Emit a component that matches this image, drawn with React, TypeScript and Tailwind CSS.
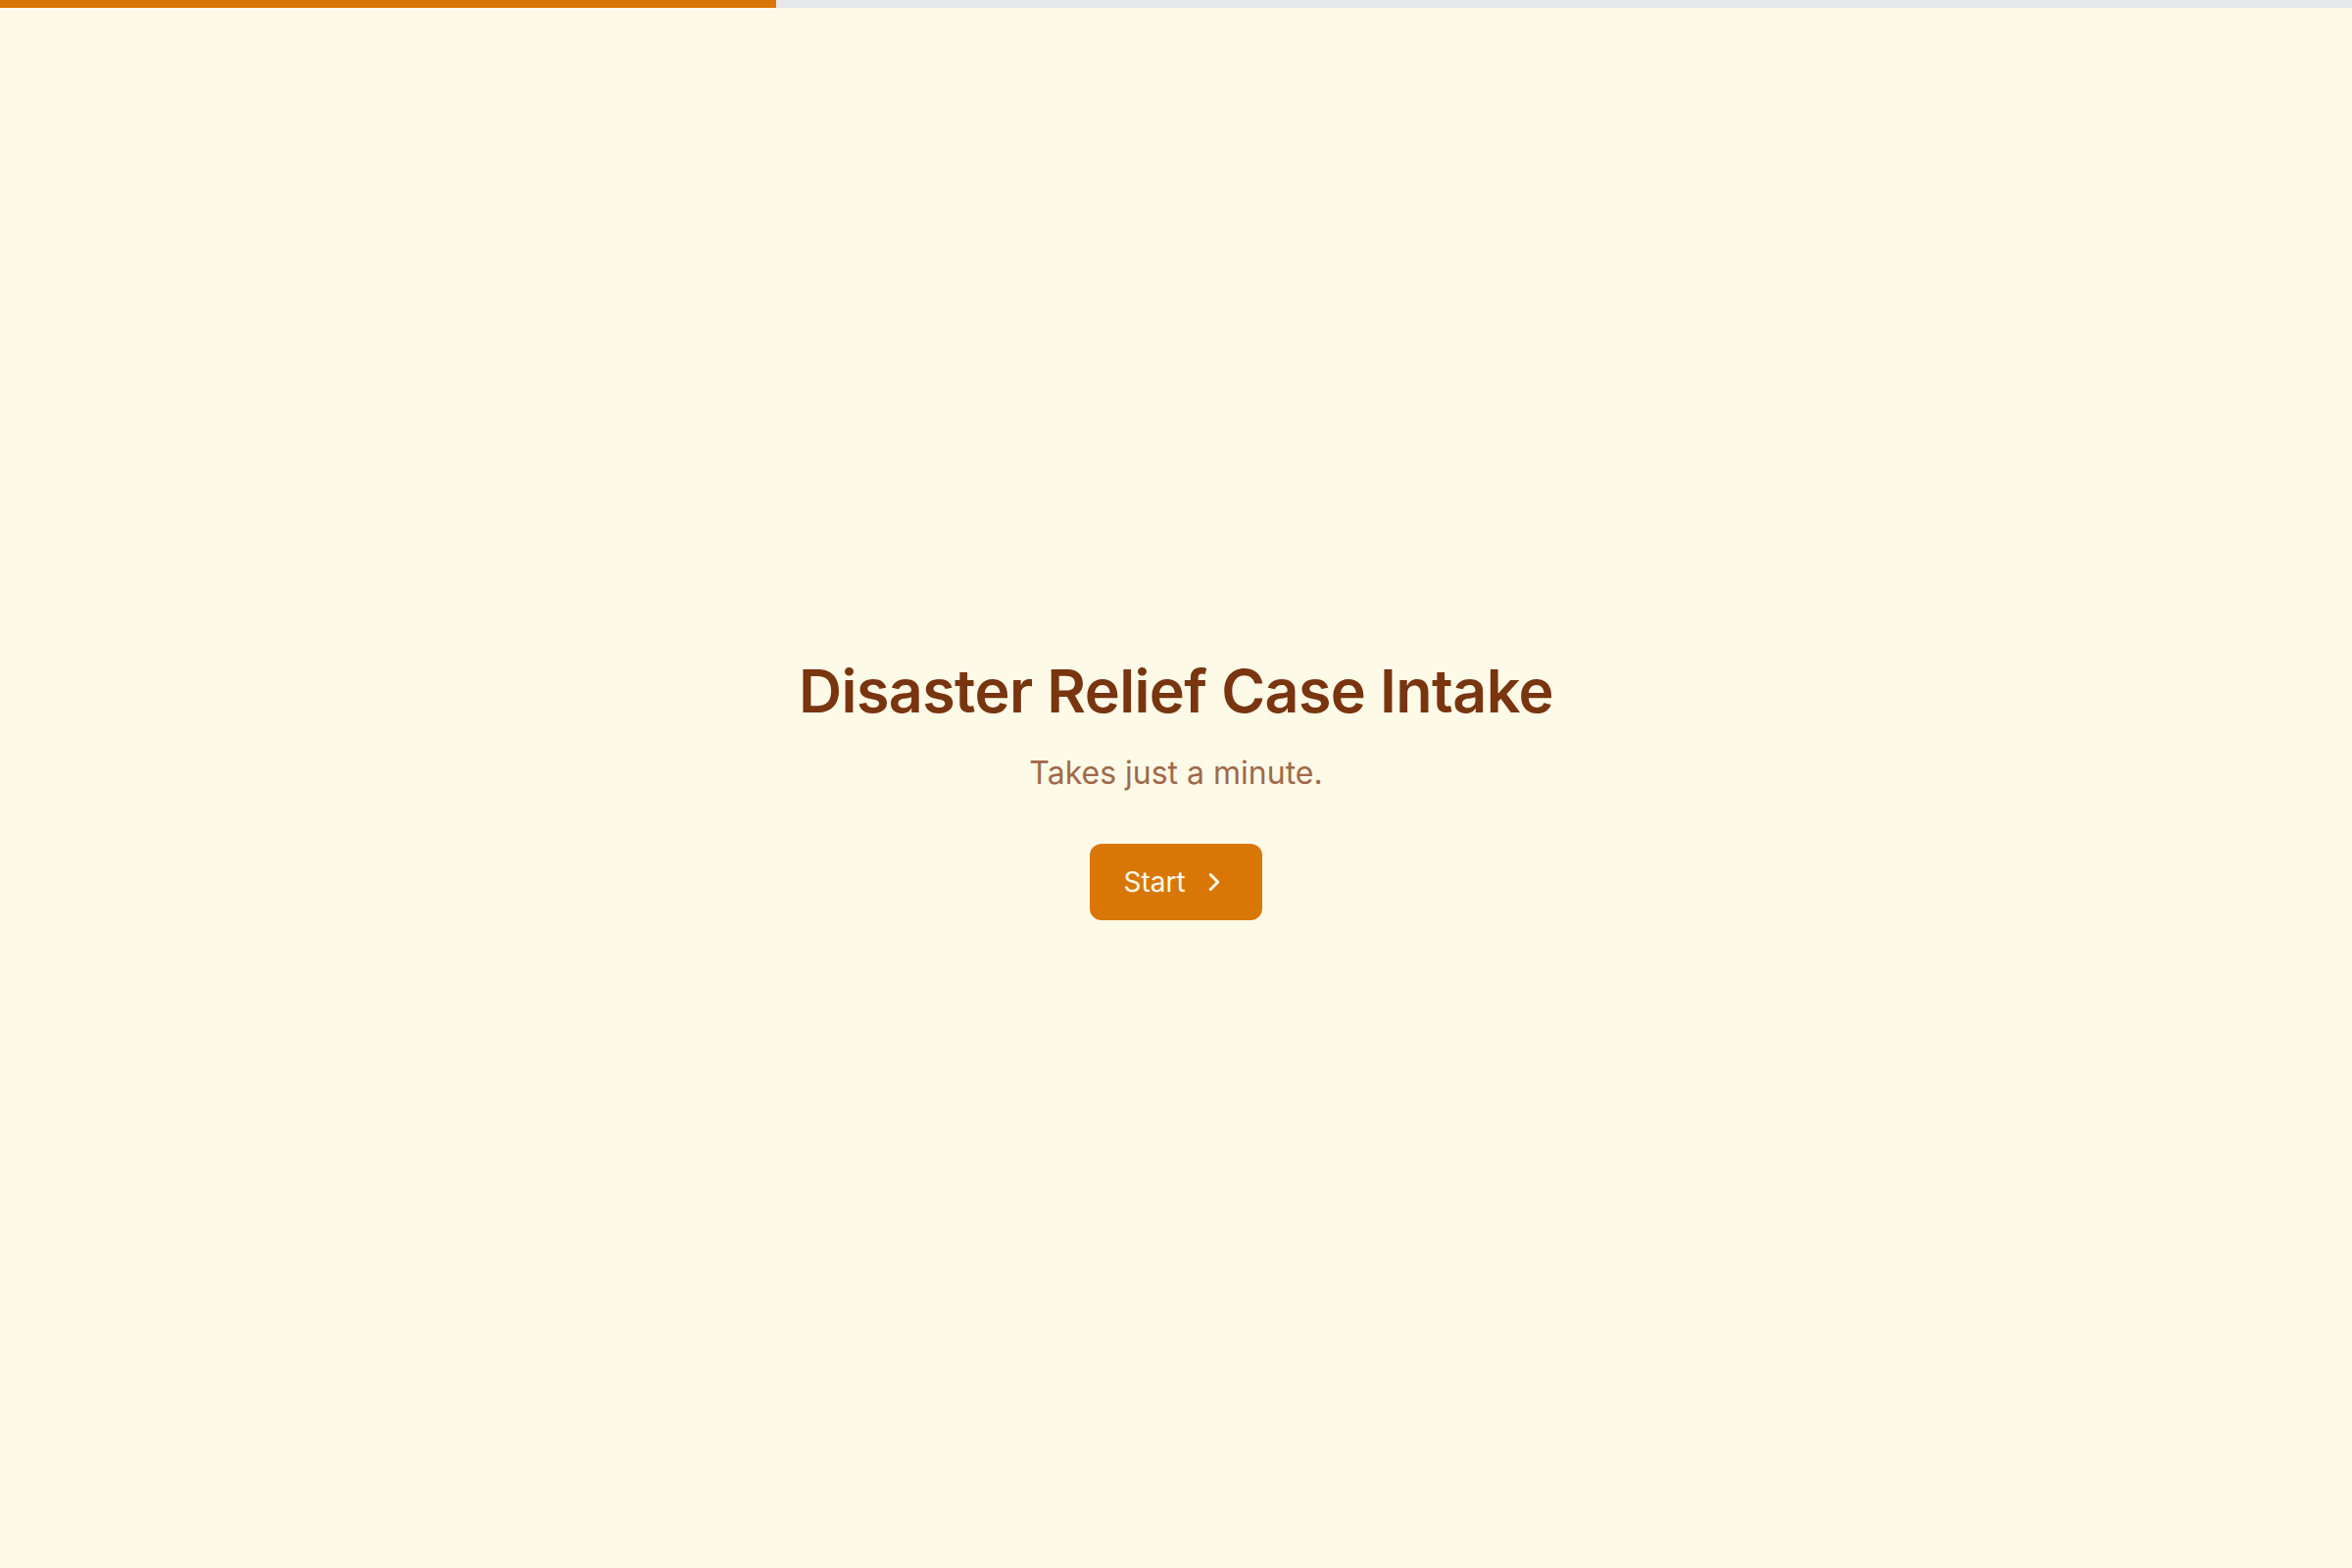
import { ChevronRight } from "lucide-react";

export default function App() {
  const progress = 33;

  return (
    <div
      className="min-h-screen bg-[#fefae8] flex flex-col"
      style={{ fontFamily: "Inter, 'Noto Sans', sans-serif" }}
    >
      {/* Progress bar */}
      <div className="h-2 w-full bg-[#e5e7eb]">
        <div className="h-full bg-[#d97706]" style={{ width: `${progress}%` }} />
      </div>

      {/* Welcome */}
      <main className="flex-1 flex flex-col items-center justify-center text-center px-6">
        <h1 className="text-[61px] leading-[72px] font-semibold tracking-[-0.01em] text-[#78350f]">
          Disaster Relief Case Intake
        </h1>
        <p className="mt-[25px] text-[32px] leading-[45px] text-[#a0694a]">Takes just a minute.</p>
        <button className="mt-[50px] h-[78px] px-[34px] rounded-xl bg-[#d97706] text-[#fffbeb] text-[28px] flex items-center gap-[14px]">
          Start
          <ChevronRight className="w-[30px] h-[30px]" strokeWidth={2.4} />
        </button>
      </main>
    </div>
  );
}
